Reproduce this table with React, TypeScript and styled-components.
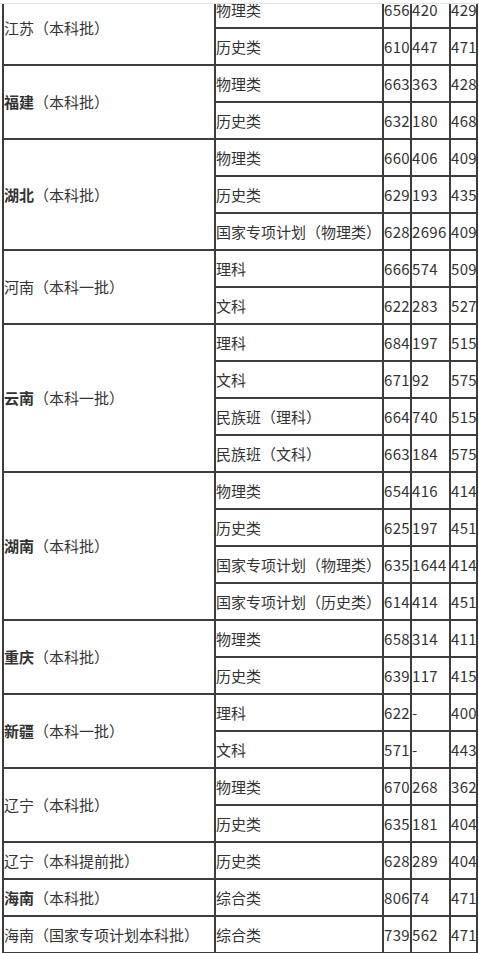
import {ReactElement} from "react";
import styled, {createGlobalStyle} from "styled-components";

const GlobalStyle = createGlobalStyle`
  html, body {
    margin: 0;
    padding: 0;
    background: #fff;
  }
`;

const Page = styled.div`
  width: 479px;
  height: 953px;
  padding-top: 3px;
  box-sizing: border-box;
  overflow: hidden;
`;

const Viewport = styled.div`
  height: 949px;
  border-top: 1px solid #e3e3e3;
  overflow: hidden;
  padding-left: 2px;
`;

const Table = styled.table`
  margin-top: -14px;
  width: 476px;
  table-layout: fixed;
  border-collapse: separate;
  border-spacing: 0;
  border: 1px solid #3d3d3d;
  font-family: "Microsoft YaHei", "Noto Sans CJK SC", sans-serif;
  font-size: 15px;
  color: #333;
`;

const Col = styled.col<{ $w: number }>`
  width: ${p => p.$w}px;
`;

const Cell = styled.td<{ $num?: boolean }>`
  border: 1px solid #3d3d3d;
  height: 35px;
  padding: 0;
  line-height: 20px;
  vertical-align: middle;
  white-space: nowrap;
  overflow: visible;
  letter-spacing: ${p => (p.$num ? "0.3px" : "0")};
`;

const Province = styled.span<{ $bold?: boolean }>`
  font-weight: ${p => (p.$bold ? 700 : 400)};
`;

type Group = {
    name: string;
    bold: boolean;
    suffix: string;
    rows: [string, string, string, string][];
};

const widths = [212, 168, 28, 39, 27];

const groups: Group[] = [
    {name: "江苏", bold: false, suffix: "（本科批）", rows: [["物理类", "656", "420", "429"], ["历史类", "610", "447", "471"]]},
    {name: "福建", bold: true, suffix: "（本科批）", rows: [["物理类", "663", "363", "428"], ["历史类", "632", "180", "468"]]},
    {
        name: "湖北", bold: true, suffix: "（本科批）", rows: [
            ["物理类", "660", "406", "409"], ["历史类", "629", "193", "435"], ["国家专项计划（物理类）", "628", "2696", "409"]]
    },
    {name: "河南", bold: false, suffix: "（本科一批）", rows: [["理科", "666", "574", "509"], ["文科", "622", "283", "527"]]},
    {
        name: "云南", bold: true, suffix: "（本科一批）", rows: [
            ["理科", "684", "197", "515"], ["文科", "671", "92", "575"],
            ["民族班（理科）", "664", "740", "515"], ["民族班（文科）", "663", "184", "575"]]
    },
    {
        name: "湖南", bold: true, suffix: "（本科批）", rows: [
            ["物理类", "654", "416", "414"], ["历史类", "625", "197", "451"],
            ["国家专项计划（物理类）", "635", "1644", "414"], ["国家专项计划（历史类）", "614", "414", "451"]]
    },
    {name: "重庆", bold: true, suffix: "（本科批）", rows: [["物理类", "658", "314", "411"], ["历史类", "639", "117", "415"]]},
    {name: "新疆", bold: true, suffix: "（本科一批）", rows: [["理科", "622", "-", "400"], ["文科", "571", "-", "443"]]},
    {name: "辽宁", bold: false, suffix: "（本科批）", rows: [["物理类", "670", "268", "362"], ["历史类", "635", "181", "404"]]},
    {name: "辽宁", bold: false, suffix: "（本科提前批）", rows: [["历史类", "628", "289", "404"]]},
    {name: "海南", bold: true, suffix: "（本科批）", rows: [["综合类", "806", "74", "471"]]},
    {name: "海南", bold: false, suffix: "（国家专项计划本科批）", rows: [["综合类", "739", "562", "471"]]},
];

export default function App(): ReactElement {
    return (
        <Page>
            <GlobalStyle/>
            <Viewport>
                <Table>
                    <colgroup>
                        {widths.map((w, i) => <Col key={i} $w={w}/>)}
                    </colgroup>
                    <tbody>
                    {groups.map((g, gi) =>
                        g.rows.map((r, ri) => (
                            <tr key={`${gi}-${ri}`}>
                                {ri === 0 && (
                                    <Cell rowSpan={g.rows.length}>
                                        <Province $bold={g.bold}>{g.name}</Province>{g.suffix}
                                    </Cell>
                                )}
                                <Cell>{r[0]}</Cell>
                                <Cell $num>{r[1]}</Cell>
                                <Cell $num>{r[2]}</Cell>
                                <Cell $num>{r[3]}</Cell>
                            </tr>
                        ))
                    )}
                    </tbody>
                </Table>
            </Viewport>
        </Page>
    );
}
